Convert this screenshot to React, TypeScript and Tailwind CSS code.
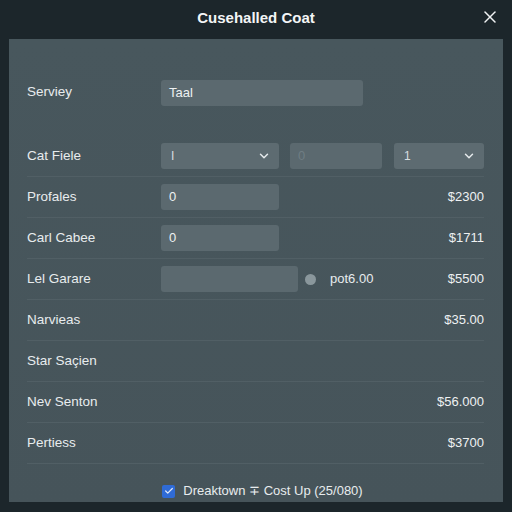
import { ChevronDown, X, Check } from "lucide-react";

const font = { fontFamily: '"Liberation Sans", Arial, sans-serif' };

function Row({ label, children, value }: { label: string; children?: React.ReactNode; value?: string }) {
  return (
    <div className="flex items-center h-[41px] border-b border-[#515f65]">
      <div className="w-[134px] shrink-0 text-[13.5px] text-[#e8ecee]">{label}</div>
      <div className="flex-1 flex items-center">{children}</div>
      {value && <div className="text-[13px] text-[#eef1f2] tabular-nums">{value}</div>}
    </div>
  );
}

function Field({ value, w, dim }: { value?: string; w: string; dim?: boolean }) {
  return (
    <div className={`${w} h-[26px] rounded-[3px] bg-[#5b696f] flex items-center px-2 text-[13px] ${dim ? "text-[#6f7d83]" : "text-[#eef1f2]"}`}>
      {value}
    </div>
  );
}

function Select({ value, w }: { value: string; w: string }) {
  return (
    <div className={`${w} h-[26px] rounded-[3px] bg-[#5d6b71] flex items-center justify-between pl-[10px] pr-2 text-[12px] text-[#d8dde0]`}>
      <span>{value}</span>
      <ChevronDown size={14} strokeWidth={2.5} className="text-[#e6eaec]" />
    </div>
  );
}

export default function App() {
  return (
    <div style={font} className="w-[512px] h-[512px] bg-[#1c262b] flex flex-col overflow-hidden">
      <div className="h-[39px] shrink-0 relative flex items-center justify-center pb-[3px]">
        <span className="text-[15px] font-bold text-[#f3f5f6]">Cusehalled Coat</span>
        <X size={20} strokeWidth={1.8} className="absolute right-[12px] top-[7px] text-[#f0f2f3]" />
      </div>
      <div className="mx-[9px] h-[463px] bg-gradient-to-b from-[#48575d] to-[#46545a] pl-[18px] pr-[19px] pt-[33px] flex flex-col">
        <div className="flex items-center h-[41px]">
          <div className="w-[134px] shrink-0 text-[13.5px] text-[#e8ecee]">Serviey</div>
          <Field value="Taal" w="w-[202px]" />
        </div>
        <div className="h-[23px]" />
        <Row label="Cat Fiele">
          <Select value="I" w="w-[118px]" />
          <div className="ml-[11px]"><Field value="0" w="w-[92px]" dim /></div>
          <div className="ml-auto"><Select value="1" w="w-[90px]" /></div>
        </Row>
        <Row label="Profales" value="$2300">
          <Field value="0" w="w-[118px]" />
        </Row>
        <Row label="Carl Cabee" value="$1711">
          <Field value="0" w="w-[118px]" />
        </Row>
        <Row label="Lel Garare" value="$5500">
          <Field w="w-[137px]" />
          <span className="ml-[7px] w-[11px] h-[11px] rounded-full bg-[#8a979c]" />
          <span className="ml-[14px] text-[13px] text-[#e8ecee]">pot6.00</span>
        </Row>
        <Row label="Narvieas" value="$35.00" />
        <Row label="Star Saçien" />
        <Row label="Nev Senton" value="$56.000" />
        <Row label="Pertiess" value="$3700" />
        <div className="flex-1 flex items-center justify-center pt-[16px] pl-[14px]">
          <div className="w-[13px] h-[13px] rounded-[2px] bg-[#2f6bd6] flex items-center justify-center">
            <Check size={10} strokeWidth={3} className="text-[#dfe8f8]" />
          </div>
          <span className="ml-[8px] text-[13px] text-[#e8ecee]">Dreaktown ∓ Cost Up (25/080)</span>
        </div>
      </div>
    </div>
  );
}
